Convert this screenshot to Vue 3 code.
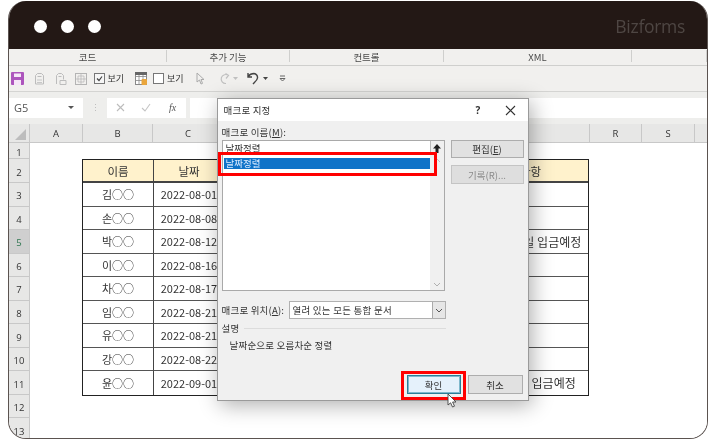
<script setup>
const groups = [
  { label: '코드', w: 158 },
  { label: '추가 기능', w: 123 },
  { label: '컨트롤', w: 154 },
  { label: 'XML', w: 188 },
  { label: '', w: 75 }
]
const cols = [
  { n: 'A', w: 53 }, { n: 'B', w: 70 }, { n: 'C', w: 71 }, { n: '', w: 366 },
  { n: 'R', w: 52 }, { n: 'S', w: 53 }, { n: '', w: 13 }
]
const rowNums = [
  { n: 1, h: 16 }, { n: 2, h: 24 }, { n: 3, h: 23.55 }, { n: 4, h: 23.55 }, { n: 5, h: 23.55, on: true },
  { n: 6, h: 23.55 }, { n: 7, h: 23.55 }, { n: 8, h: 23.55 }, { n: 9, h: 23.55 }, { n: 10, h: 23.55 },
  { n: 11, h: 23.55 }, { n: 12, h: 23.55 }, { n: 13, h: 23.55 }
]
const rows = [
  ['김○○', '2022-08-01', ''],
  ['손○○', '2022-08-08', ''],
  ['박○○', '2022-08-12', '2022-08-20일 입금예정'],
  ['이○○', '2022-08-16', ''],
  ['차○○', '2022-08-17', ''],
  ['임○○', '2022-08-21', ''],
  ['유○○', '2022-08-21', ''],
  ['강○○', '2022-08-22', ''],
  ['윤○○', '2022-09-01', '2022-09-05 입금예정']
]
</script>

<template>
  <div class="page">
    <div class="window">
      <header class="titlebar">
        <div class="dots"><i></i><i></i><i></i></div>
        <span class="brand">Bizforms</span>
      </header>

      <div class="ribbon">
        <div v-for="g in groups" :key="g.w" class="group" :style="{ width: g.w + 'px' }">{{ g.label }}</div>
      </div>

      <div class="toolbar">
        <svg class="ic" width="13" height="13" viewBox="0 0 13 13"><rect width="13" height="13" rx="1" fill="#ad55bd"/><rect x="3" y="1.500" width="7" height="3.500" fill="#f6e6f8"/><rect x="3" y="8" width="7" height="5" fill="#f6e6f8"/></svg>
        <svg class="ic" style="margin-left:10px" width="11" height="13" viewBox="0 0 11 13" fill="none" stroke="#bcbcbc"><path d="M1.500 12V3.500l2-2h4l2 2V12zM3.500 4.500h4"/><path d="M3 10.500h5M3 8h5" stroke-width=".8"/></svg>
        <svg class="ic" style="margin-left:10px" width="13" height="13" viewBox="0 0 13 13" fill="none" stroke="#bcbcbc"><path d="M1.500 12V3.500l2-2h3l2 2v4M3.500 4.500h3M5 12.500h6v-4H5z"/></svg>
        <svg class="ic" style="margin-left:7px" width="12" height="12" viewBox="0 0 12 12" fill="none" stroke="#b4b4b4"><rect x=".5" y=".5" width="11" height="11"/><path d="M3 3h6v6H3zM6 1v10M1 6h10" stroke-width=".7"/></svg>
        <span class="check" style="margin-left:7px"><svg width="9" height="9" viewBox="0 0 9 9" fill="none" stroke="#444" stroke-width="1.200"><path d="M2 4.500l2 2 3-4"/></svg></span>
        <span class="tool-label">보기</span>
        <svg class="ic" style="margin-left:11px" width="12" height="13" viewBox="0 0 12 13"><rect x=".5" y=".5" width="11" height="12" fill="#fff" stroke="#888"/><path d="M.5 4.500h11M4 .5v12M8 .5v12M.5 8.500h11" stroke="#888" stroke-width=".8"/><rect x="0" y="0" width="12" height="3" fill="#666"/><rect x="6.500" y="7" width="5.500" height="6" rx="1" fill="#eaa63c"/></svg>
        <span class="check blank" style="margin-left:6px"></span>
        <span class="tool-label">보기</span>
        <svg class="ic" style="margin-left:12px" width="9" height="13" viewBox="0 0 9 13" fill="none" stroke="#aaa"><path d="M1 1v9l2.500-2 1.500 4 1.500-.6L5 7.500h3z"/></svg>
        <svg class="ic" style="margin-left:12px" width="14" height="13" viewBox="0 0 14 13" fill="none" stroke="#c0c0c0" stroke-width="1.200"><path d="M11.500 3.500A4.500 4.500 0 1 0 9 11.500M8.500 1.500l3 2-2.500 3"/></svg>
        <svg class="ic" style="margin-left:2px" width="5" height="4" viewBox="0 0 5 4"><path d="M0 0h5L2.500 3z" fill="#c0c0c0"/></svg>
        <svg class="ic" style="margin-left:9px" width="12" height="13" viewBox="0 0 12 13" fill="none" stroke="#444" stroke-width="1.400"><path d="M1 4.500C3 2 5 1.500 7 1.500a4 4 0 0 1 3.500 4.500c-.3 2.500-2.500 4-4.500 6M1 1v4h4"/></svg>
        <svg class="ic" style="margin-left:4px" width="5" height="4" viewBox="0 0 5 4"><path d="M0 0h5L2.500 3z" fill="#444"/></svg>
        <svg class="ic" style="margin-left:11px" width="7" height="7" viewBox="0 0 7 7" fill="none" stroke="#666"><path d="M1 1h5M1 3.500h5L3.500 6z"/></svg>
      </div>

      <div class="formula">
        <div class="namebox"><span>G5</span><i class="caret"></i></div>
        <span class="grip">⋮</span>
        <div class="fxbox">
          <svg width="9" height="9" viewBox="0 0 9 9" stroke="#bcbcbc" stroke-width="1.100"><path d="M1 1l7 7M8 1L1 8"/></svg>
          <svg class="fx-c" width="10" height="9" viewBox="0 0 10 9" fill="none" stroke="#c4c4c4" stroke-width="1.100"><path d="M1 5l3 3 5-7"/></svg>
          <span class="fx-f">fx</span>
        </div>
        <div class="finput"></div>
      </div>

      <div class="colheads">
        <div class="corner"><i></i></div>
        <div v-for="(c, i) in cols" :key="i" class="colhead" :style="{ width: c.w + 'px' }">{{ c.n }}</div>
      </div>

      <div class="sheet">
        <div class="rownums">
          <div v-for="r in rowNums" :key="r.n" class="rownum" :class="{ on: r.on }" :style="{ height: r.h + 'px' }">{{ r.n }}</div>
        </div>
        <div class="cells">
          <div class="table">
            <div class="th">이름</div><div class="th">날짜</div><div class="th gap"></div><div class="th last">특이사항</div>
            <template v-for="r in rows" :key="r[0]">
              <div class="td">{{ r[0] }}</div><div class="td">{{ r[1] }}</div><div class="td gap"></div><div class="td note">{{ r[2] }}</div>
            </template>
          </div>
        </div>
      </div>

      <section class="dialog">
        <div class="dlg-title">
          <span>매크로 지정</span>
          <span class="q">?</span>
          <svg class="close" width="11" height="11" viewBox="0 0 11 11" stroke="#333" stroke-width="1.100"><path d="M1 1l9 9M10 1l-9 9"/></svg>
        </div>
        <div class="dlg-body">
          <div class="lbl name-lbl">매크로 이름(<u>M</u>):</div>
          <div class="main">
            <div class="listwrap">
              <div class="macro-input">
                <span>날짜정렬</span>
                <span class="up"><svg width="8" height="9" viewBox="0 0 8 9"><path d="M4 0l4 4.500H5.500V9h-3V4.500H0z" fill="#222"/></svg></span>
              </div>
              <div class="list">
                <div class="list-items"><div class="sel">날짜정렬</div></div>
                <div class="scroll">
                  <svg width="8" height="5" viewBox="0 0 8 5" fill="none" stroke="#c4c4c4"><path d="M1 4l3-3 3 3"/></svg>
                  <svg width="8" height="5" viewBox="0 0 8 5" fill="none" stroke="#b0b0b0"><path d="M1 1l3 3 3-3"/></svg>
                </div>
              </div>
            </div>
            <div class="side">
              <button class="btn">편집(<u>E</u>)</button>
              <button class="btn dim">기록(R)...</button>
            </div>
          </div>
          <div class="loc">
            <span class="lbl">매크로 위치(<u>A</u>):</span>
            <div class="select">
              <span class="sel-text">열려 있는 모든 통합 문서</span>
              <span class="sel-arrow"><svg width="8" height="5" viewBox="0 0 8 5" fill="none" stroke="#555"><path d="M1 1l3 3 3-3"/></svg></span>
            </div>
          </div>
          <div class="desc-head"><span class="lbl">설명</span><i></i></div>
          <div class="desc">날짜순으로 오름차순 정렬</div>
          <div class="actions">
            <button class="btn ok">확인</button>
            <button class="btn cancel">취소</button>
          </div>
        </div>
        <div class="red red-list"></div>
        <div class="red red-ok"></div>
        <svg class="cursor" width="10" height="15" viewBox="0 0 10 15"><path d="M1 1v11l2.600-2.200L5.500 14l2-.8L5.600 9H9z" fill="#fff" stroke="#444" stroke-width=".9"/></svg>
      </section>
    </div>
  </div>
</template>

<style>
html, body { margin: 0; background: #fff; }
</style>

<style scoped>
.page {
  width: 715px;
  height: 440px;
  padding: 1px 7px 1px 8px;
  box-sizing: border-box;
  background: #fff;
  font-family: "Noto Sans CJK KR", "Noto Sans", sans-serif;
  color: #333;
  filter: blur(.45px);
  overflow: hidden;
}
.window {
  position: relative;
  height: 438px;
  box-sizing: border-box;
  border: 1.5px solid #5b5350;
  border-top: 0;
  border-radius: 18px;
  overflow: hidden;
  background: #fff;
}
.titlebar {
  height: 48px;
  background: #231815;
  display: flex;
  align-items: center;
  justify-content: space-between;
  padding: 2px 24px 0 27px;
  box-sizing: border-box;
  margin: 0 -2px;
}
.dots { display: flex; gap: 14px; }
.dots i { width: 13px; height: 13px; border-radius: 50%; background: #fff; display: block; }
.brand { font: 500 17.500px "Open Sans", sans-serif; color: #4e4643; letter-spacing: -.3px; }
.ribbon {
  height: 17px;
  display: flex;
  background: #f1f0ee;
  border-bottom: 1px solid #cfcfcd;
  box-sizing: border-box;
}
.group {
  flex: none;
  height: 12px;
  margin-top: 1px;
  font-size: 9.500px;
  line-height: 15px;
  text-align: center;
  color: #4a4a4a;
  border-right: 1px solid #cfcfcd;
  box-sizing: border-box;
}
.toolbar {
  height: 26px;
  display: flex;
  align-items: center;
  background: #f1f0ee;
  border-bottom: 1px solid #d4d4d2;
  box-sizing: border-box;
  padding-left: 1.500px;
}
.ic { flex: none; display: block; }
.check {
  width: 11px;
  height: 11px;
  flex: none;
  box-sizing: border-box;
  border: 1px solid #777;
  background: #f6f6f6;
  display: block;
}
.check.blank { background: #fff; }
.check svg { display: block; }
.tool-label { font-size: 9px; color: #333; margin-left: 3px; line-height: 12px; }
.formula {
  height: 32px;
  display: flex;
  align-items: center;
  background: #eeeeec;
  box-sizing: border-box;
  padding-bottom: 1px;
}
.namebox {
  width: 74px;
  height: 20px;
  flex: none;
  background: #fff;
  display: flex;
  align-items: center;
  justify-content: space-between;
  padding: 0 9px 0 5px;
  box-sizing: border-box;
  font: 11px "Open Sans", sans-serif;
  color: #555;
}
.caret { width: 0; height: 0; border: 3px solid transparent; border-top: 3px solid #555; border-bottom: 0; }
.grip { width: 24px; flex: none; text-align: center; color: #bbb; font-size: 9px; }
.fxbox {
  width: 79px;
  height: 20px;
  flex: none;
  background: #fff;
  display: flex;
  align-items: center;
  box-sizing: border-box;
  padding-left: 9px;
}
.fx-c { margin-left: 16px; }
.fx-f { margin-left: 18px; font: italic 10px "Liberation Serif", serif; color: #555; }
.finput { flex: 1; height: 20px; margin-left: 4px; background: #fff; }
.colheads { height: 19px; display: flex; background: #e7e7e6; border-bottom: 1px solid #c8c8c8; box-sizing: border-box; }
.corner {
  width: 21px;
  flex: none;
  position: relative;
  border-right: 1px solid #c8c8c8;
  box-sizing: border-box;
}
.corner i {
  position: absolute;
  right: 3px;
  bottom: 2px;
  border-style: solid;
  border-width: 0 0 11px 11px;
  border-color: transparent transparent #bdbdbd transparent;
}
.colhead {
  flex: none;
  box-sizing: border-box;
  border-right: 1px solid #c8c8c8;
  text-align: center;
  font: 9.500px/19px "Open Sans", sans-serif;
  color: #333;
}
.sheet { display: flex; height: 296px; overflow: hidden; }
.rownums { width: 21px; flex: none; background: #e7e7e6; border-right: 1px solid #c8c8c8; box-sizing: border-box; }
.rownum {
  box-sizing: border-box;
  border-bottom: 1px solid #c8c8c8;
  font: 9.500px "Open Sans", sans-serif;
  color: #333;
  display: flex;
  align-items: center;
  justify-content: center;
  padding-top: 3px;
}
.rownum.on { background: #cfcfcf; color: #2f7650; }
.cells { flex: 1; padding: 16px 0 0 52px; background: #fff; }
.table {
  width: 507px;
  display: grid;
  grid-template-columns: 71px 71px 237px minmax(0, 1fr);
  grid-template-rows: 23px repeat(9, 23.500px);
  border: 1.500px solid #222;
  box-sizing: border-box;
}
.th, .td {
  display: flex;
  align-items: center;
  justify-content: center;
  min-width: 0;
  font-size: 11px;
  white-space: nowrap;
  color: #333;
  box-sizing: border-box;
  border-right: 1px solid #444;
  border-bottom: 1px solid #555;
}
.th { background: #fff2cc; border-bottom: 2px solid #444; font-size: 11.500px; }
.th.last { padding-right: 10px; }
.td.note { font-size: 12px; padding-right: 7px; }
.th:nth-child(4n), .td:nth-child(4n) { border-right: 0; }
.td:nth-last-child(-n+4) { border-bottom: 0; }
.gap { background: #fff; }
.dialog {
  position: absolute;
  left: 207.500px;
  top: 97px;
  width: 312px;
  height: 303px;
  background: #f0f0f0;
  border: 1px solid #9a9a9a;
  box-sizing: border-box;
  box-shadow: 3px 4px 20px rgba(0, 0, 0, .32);
  font-size: 9.500px;
  color: #333;
}
.dlg-title {
  height: 22px;
  background: #fff;
  display: flex;
  align-items: center;
  padding-left: 6px;
  font-size: 9.500px;
  letter-spacing: .2px;
}
.q { margin-left: auto; font: 700 10px "Open Sans", sans-serif; }
.close { margin: 0 12px 0 24px; }
.dlg-body { padding: 0 4px; }
.lbl { line-height: 12px; letter-spacing: .2px; }
.name-lbl { padding-top: 5px; height: 14px; }
.name-lbl, .loc .lbl, .desc-head .lbl { display: block; }
.main { display: flex; gap: 6px; }
.listwrap { width: 224px; height: 151px; box-sizing: border-box; border: 1px solid #a9a9a9; background: #fff; display: flex; flex-direction: column; }
.macro-input { height: 14px; display: flex; align-items: center; justify-content: space-between; padding-left: 3px; flex: none; font-size: 9.500px; }
.up { width: 14px; height: 14px; display: flex; align-items: center; justify-content: center; background: #f0f0f0; border-left: 1px solid #bbb; box-sizing: border-box; }
.list { flex: 1; display: flex; min-height: 0; }
.list-items { flex: 1; padding: 3px 0 0 1px; }
.sel { height: 11px; background: #0f73c8; color: #dcecff; line-height: 11px; padding-left: 2px; }
.scroll { width: 14px; background: #f0f0f0; display: flex; flex-direction: column; align-items: center; justify-content: space-between; padding: 3px 0; box-sizing: border-box; }
.side { display: flex; flex-direction: column; gap: 7px; }
.btn {
  width: 73px;
  height: 18px;
  padding: 0;
  border: 1px solid #adadad;
  background: #e1e1e1;
  font: 9.500px "Noto Sans CJK KR", sans-serif;
  color: #333;
  line-height: 16px;
}
.btn.dim { height: 19px; color: #8a8a8a; border-color: #c4c4c4; background: #dedede; }
.loc { display: flex; align-items: center; margin-top: 10px; }
.loc .lbl { width: 67px; flex: none; white-space: nowrap; }
.select {
  width: 157px;
  height: 18px;
  background: #fff;
  box-sizing: border-box;
  border: 1px solid #b0b0b0;
  display: flex;
  align-items: center;
  justify-content: space-between;
  padding-left: 3px;
}
.sel-text { letter-spacing: .25px; }
.sel-arrow { width: 13px; height: 16px; background: #e6e6e6; border-left: 1px solid #aaa; display: flex; align-items: center; justify-content: center; box-sizing: border-box; }
.desc-head { display: flex; align-items: center; gap: 5px; margin-top: 3px; height: 12px; }
.desc-head i { flex: 1; height: 1px; background: #dcdcdc; margin-right: 78px; }
.desc { padding: 5px 0 0 8px; line-height: 13px; letter-spacing: .2px; }
.actions { display: flex; justify-content: flex-end; gap: 7px; margin: 23px 1px 0 0; }
.btn.ok { width: 54px; height: 19px; background: #e5f1fb; border: 1px solid #2b7d97; box-shadow: inset 0 0 0 1px #7fb8cc; }
.btn.cancel { width: 55px; height: 19px; }
.red { position: absolute; border: 3px solid #f00; box-sizing: border-box; pointer-events: none; }
.red-list { left: 0; top: 53px; width: 219px; height: 24px; }
.red-ok { left: 183.500px; top: 272px; width: 65px; height: 29px; }
.cursor { position: absolute; left: 229px; top: 294px; }
</style>
